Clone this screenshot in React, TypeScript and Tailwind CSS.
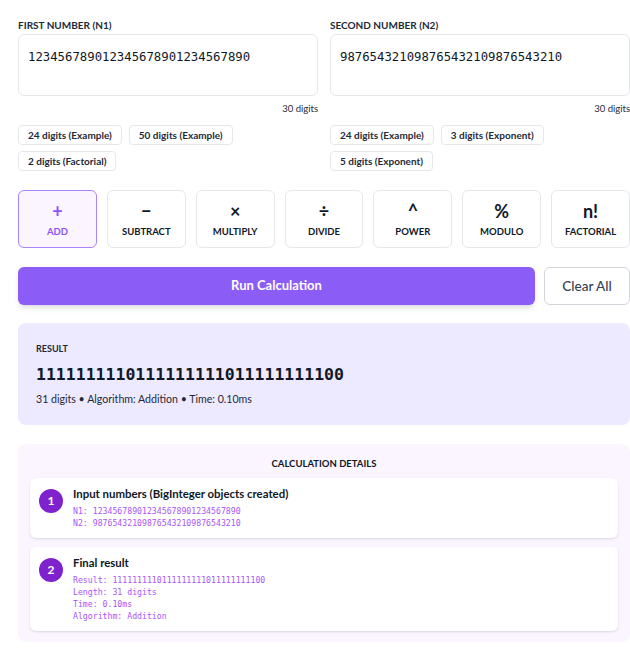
import React from "react";

const ops = [
  { sym: "+", label: "ADD", active: true },
  { sym: "−", label: "SUBTRACT" },
  { sym: "×", label: "MULTIPLY" },
  { sym: "÷", label: "DIVIDE" },
  { sym: "^", label: "POWER" },
  { sym: "%", label: "MODULO" },
  { sym: "n!", label: "FACTORIAL" },
];

const mono = { fontFamily: '"DejaVu Sans Mono", monospace' };

function Preset({ children }: { children: React.ReactNode }) {
  return (
    <button className="h-[20px] px-[9px] rounded-[4px] border border-gray-200 bg-white text-[10px] font-bold text-gray-800 leading-none">
      {children}
    </button>
  );
}

function NumberCol({ label, value, presets }: { label: string; value: string; presets: string[][] }) {
  return (
    <div className="flex flex-col">
      <div className="text-[10px] font-bold text-gray-800 leading-[14px] h-[16px]">{label}</div>
      <div className="h-[62px] rounded-[6px] border border-gray-200 bg-white px-[9px] pt-[13px] text-[12.3px] text-gray-900" style={mono}>
        {value}
      </div>
      <div className="text-right text-[9.5px] text-gray-800 mt-[6px] leading-[14px]">30 digits</div>
      <div className="flex flex-col gap-[6px] mt-[9px]">
        {presets.map((row, i) => (
          <div key={i} className="flex gap-[7px]">
            {row.map((p) => (
              <Preset key={p}>{p}</Preset>
            ))}
          </div>
        ))}
      </div>
    </div>
  );
}

export default function App() {
  return (
    <div className="w-[630px] bg-white pl-[18px] pt-[18px] pb-[24px]" style={{ fontFamily: "Lato, sans-serif" }}>
      <div className="w-[612px]">
        <div className="grid grid-cols-2 gap-x-[12px]">
          <NumberCol
            label="FIRST NUMBER (N1)"
            value="123456789012345678901234567890"
            presets={[["24 digits (Example)", "50 digits (Example)"], ["2 digits (Factorial)"]]}
          />
          <NumberCol
            label="SECOND NUMBER (N2)"
            value="987654321098765432109876543210"
            presets={[["24 digits (Example)", "3 digits (Exponent)"], ["5 digits (Exponent)"]]}
          />
        </div>

        <div className="grid grid-cols-7 gap-[10px] mt-[19px]">
          {ops.map((o) => (
            <button
              key={o.label}
              className={`h-[58px] rounded-[6px] border flex flex-col items-center justify-center ${
                o.active ? "border-violet-400 bg-[#faf5ff] text-violet-500" : "border-gray-200 bg-white text-gray-900"
              }`}
            >
              <span className="text-[18px] font-bold leading-[20px]">{o.sym}</span>
              <span className="text-[9.5px] font-bold mt-[5px] leading-[12px]">{o.label}</span>
            </button>
          ))}
        </div>

        <div className="flex gap-[9px] mt-[19px]">
          <button className="flex-1 h-[38px] rounded-[6px] bg-[#8b5cf6] text-white text-[13px] font-bold shadow-md">
            Run Calculation
          </button>
          <button className="w-[86px] h-[38px] rounded-[6px] border border-gray-300 bg-white text-[13.5px] font-medium text-gray-700">
            Clear All
          </button>
        </div>

        <div className="mt-[18px] rounded-[8px] bg-[#ede9fe] px-[18px] pt-[20px] pb-[18px]">
          <div className="text-[9px] font-bold text-gray-800 leading-[12px]">RESULT</div>
          <div className="text-[16.5px] font-bold text-gray-900 mt-[9px] leading-[22px]" style={mono}>
            1111111110111111111011111111100
          </div>
          <div className="text-[10.6px] text-gray-800 mt-[5px] leading-[16px]">31 digits • Algorithm: Addition • Time: 0.10ms</div>
        </div>

        <div className="mt-[19px] rounded-[8px] bg-[#faf5ff] px-[12px] pt-[14px] pb-[11px]">
          <div className="text-center text-[9.5px] font-bold text-gray-900 leading-[12px]">CALCULATION DETAILS</div>
          <div className="flex flex-col gap-[9px] mt-[8px]">
            <div className="bg-white rounded-[6px] shadow-sm flex gap-[10px] px-[9px] pt-[8px] pb-[9px]">
              <div className="w-[24px] h-[24px] rounded-full bg-[#7e22ce] text-white text-[12px] font-bold flex items-center justify-center mt-[3px] shrink-0">1</div>
              <div>
                <div className="text-[11.4px] font-bold text-gray-900 leading-[16px]">Input numbers (BigInteger objects created)</div>
                <div className="text-[8.2px] text-[#a855f7] leading-[12px] mt-[3px]" style={mono}>
                  <div>N1: 123456789012345678901234567890</div>
                  <div>N2: 987654321098765432109876543210</div>
                </div>
              </div>
            </div>
            <div className="bg-white rounded-[6px] shadow-sm flex gap-[10px] px-[9px] pt-[8px] pb-[9px]">
              <div className="w-[24px] h-[24px] rounded-full bg-[#7e22ce] text-white text-[12px] font-bold flex items-center justify-center mt-[3px] shrink-0">2</div>
              <div>
                <div className="text-[11.4px] font-bold text-gray-900 leading-[16px]">Final result</div>
                <div className="text-[8.2px] text-[#a855f7] leading-[12px] mt-[3px]" style={mono}>
                  <div>Result: 1111111110111111111011111111100</div>
                  <div>Length: 31 digits</div>
                  <div>Time: 0.10ms</div>
                  <div>Algorithm: Addition</div>
                </div>
              </div>
            </div>
          </div>
        </div>
      </div>
    </div>
  );
}
